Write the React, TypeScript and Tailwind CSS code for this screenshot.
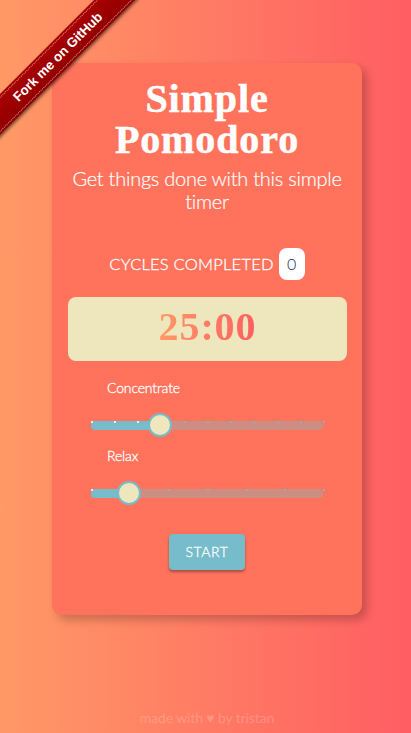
type SliderProps = { label: string; steps: number; value: number };

function Slider({ label, steps, value }: SliderProps) {
  const percent = (value / steps) * 100;
  const marks = Array.from({ length: steps + 1 }, (_, i) => i);
  return (
    <div className="h-[68px]">
      <div className="ml-[39px] h-5 text-[14px] leading-5 tracking-[-0.15px] whitespace-nowrap [-webkit-text-stroke:0.3px_white]">{label}</div>
      <div className="relative mt-[23px] ml-[23px] h-[9px] w-[232px] rounded-[4px] bg-[#cc8d82]">
        <div
          className="absolute left-0 top-0 h-[9px] rounded-l-[4px] bg-[#76bccb]"
          style={{ width: `${percent}%` }}
        />
        {marks.map((i) => (
          <span
            key={i}
            className={`absolute top-0 size-[2px] ${i <= value ? "bg-[#eceff0]" : "bg-[#83b4bf]"}`}
            style={{ left: `${Math.round((i / steps) * 232)}px` }}
          />
        ))}
        <span
          className="absolute -top-2 -ml-[13px] size-6 rounded-full border-2 border-[#76bccb] bg-[#eee6bc]"
          style={{ left: `${Math.round((percent / 100) * 232)}px` }}
        />
      </div>
    </div>
  );
}

export default function App() {
  return (
    <div className="relative flex h-[733px] w-full flex-col items-center overflow-hidden bg-[linear-gradient(to_right,#ff9966,#ff5e62)] pt-[63px] font-['Lato',sans-serif] font-light text-white">
      <main className="ml-[3px] flex h-[552px] w-[310px] shrink-0 flex-col rounded-[10px] bg-[#ff735c] px-4 shadow-[5px_5px_10px_rgba(0,0,0,0.22)]">
        <h1 className="mt-[15px] text-center font-['Liberation_Serif',serif] text-[40px] leading-[41px] font-bold tracking-[0.9px] [-webkit-text-stroke:0.5px_white]">
          Simple
          <br />
          Pomodoro
        </h1>
        <h2 className="-mx-2 mt-[7px] text-center text-[20px] leading-[23px] tracking-[-0.26px] [-webkit-text-stroke:0.2px_white]">
          Get things done with this simple
          <br />
          timer
        </h2>
        <div className="mt-[35px] flex h-8 items-center justify-center gap-[5px]">
          <span className="text-[16.5px] leading-8 tracking-[0.22px] [-webkit-text-stroke:0.3px_white]">CYCLES COMPLETED</span>
          <span className="h-8 w-[26px] rounded-lg bg-white text-center text-[16px] leading-[31px] text-[#24304a]">
            0
          </span>
        </div>
        <div className="mt-[17px] flex h-16 w-[279px] justify-center rounded-lg bg-[#eee6bc]">
          <span className="bg-[linear-gradient(to_right,#ff9966,#ff5e62)] bg-clip-text font-['Liberation_Serif',serif] text-[40px] leading-[60px] font-bold tracking-[0.9px] text-transparent">
            25:00
          </span>
        </div>
        <div className="mt-[17px]">
          <Slider label="Concentrate" steps={10} value={3} />
          <Slider label="Relax" steps={6} value={1} />
        </div>
        <button className="mt-5 ml-[101px] h-9 w-[76px] rounded-[4px] bg-[#76bccb] text-[14px] leading-[34px] tracking-[0.6px] shadow-[0_2px_3px_rgba(0,0,0,0.35)] [-webkit-text-stroke:0.3px_white]">
          START
        </button>
      </main>
      <footer className="mt-[93px] ml-[3px] text-[14px] leading-5 font-normal tracking-[-0.12px] text-white/20">
        made with ♥ by tristan
      </footer>

      <div className="absolute left-[-43px] top-[43px] h-[29px] w-[200px] -rotate-45 bg-[#aa0000] bg-[linear-gradient(to_bottom,rgba(0,0,0,0),rgba(0,0,0,0.15))] py-[2px] shadow-[0_2px_3px_rgba(0,0,0,0.5)]">
        <div className="h-[25px] border-y border-dotted border-white/60 pl-[2px] text-center font-['Liberation_Sans',sans-serif] text-[13.3px] leading-[23px] font-bold">
          Fork me on GitHub
        </div>
      </div>
    </div>
  );
}
